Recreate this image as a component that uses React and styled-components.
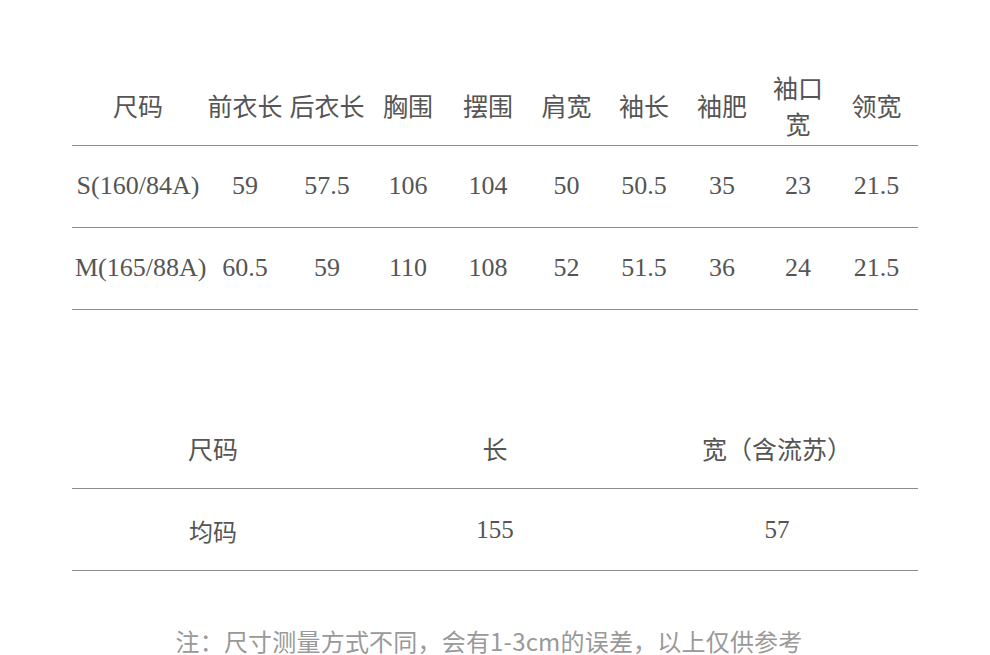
import React from "react";
import styled, { createGlobalStyle } from "styled-components";

const Global = createGlobalStyle`
  body {
    margin: 0;
    background: #fff;
  }
`;

const Page = styled.div`
  width: 990px;
  height: 655px;
  box-sizing: border-box;
  padding: 63px 72px 0 72px;
  overflow: hidden;
  font-family: "Liberation Serif", "Noto Sans CJK SC", serif;
  color: #555;
`;

const Table = styled.table`
  width: 846px;
  border-collapse: collapse;
  table-layout: fixed;
  margin-bottom: ${(p) => p.$gap || 0}px;
`;

const Row = styled.tr`
  height: 82px;
  border-bottom: 1px solid #8c8c8c;
`;

const Cell = styled.td`
  padding: ${(p) => (p.$head ? "8px 3px 0" : "0 3px")};
  text-align: center;
  vertical-align: middle;
  font-size: ${(p) => p.$size || 25}px;
  line-height: 36px;
  white-space: ${(p) => (p.$nowrap ? "nowrap" : "normal")};
`;

const SansCell = styled(Cell)`
  font-family: "Noto Sans CJK SC", sans-serif;
  font-size: 24px;
  padding-top: 2px;
`;

const Note = styled.p`
  margin: 55px 12px 0 0;
  text-align: center;
  font-family: "Noto Sans CJK SC", sans-serif;
  font-size: 24px;
  line-height: 30px;
  letter-spacing: 0.2px;
  color: #999;
`;

const widths = [132, 82, 82, 80, 80, 77, 78, 78, 74, 83];
const headers = ["尺码", "前衣长", "后衣长", "胸围", "摆围", "肩宽", "袖长", "袖肥", "袖口宽", "领宽"];
const rows = [
  ["S(160/84A)", "59", "57.5", "106", "104", "50", "50.5", "35", "23", "21.5"],
  ["M(165/88A)", "60.5", "59", "110", "108", "52", "51.5", "36", "24", "21.5"],
];

export default function App() {
  return (
    <Page>
      <Global />
      <Table $gap={97}>
        <colgroup>
          {widths.map((w, i) => (
            <col key={i} style={{ width: w }} />
          ))}
        </colgroup>
        <tbody>
          <Row>
            {headers.map((h, i) => (
              <Cell key={i} $head>
                {h}
              </Cell>
            ))}
          </Row>
          {rows.map((r, ri) => (
            <Row key={ri}>
              {r.map((c, i) => (
                <Cell key={i} $nowrap $size={26}>
                  {c}
                </Cell>
              ))}
            </Row>
          ))}
        </tbody>
      </Table>

      <Table>
        <colgroup>
          <col style={{ width: 282 }} />
          <col style={{ width: 282 }} />
          <col style={{ width: 282 }} />
        </colgroup>
        <tbody>
          <Row>
            <Cell $head>尺码</Cell>
            <Cell $head>长</Cell>
            <Cell $head $nowrap>
              宽（含流苏）
            </Cell>
          </Row>
          <Row>
            <SansCell>均码</SansCell>
            <Cell>155</Cell>
            <Cell>57</Cell>
          </Row>
        </tbody>
      </Table>

      <Note>注：尺寸测量方式不同，会有1-3cm的误差，以上仅供参考</Note>
    </Page>
  );
}
